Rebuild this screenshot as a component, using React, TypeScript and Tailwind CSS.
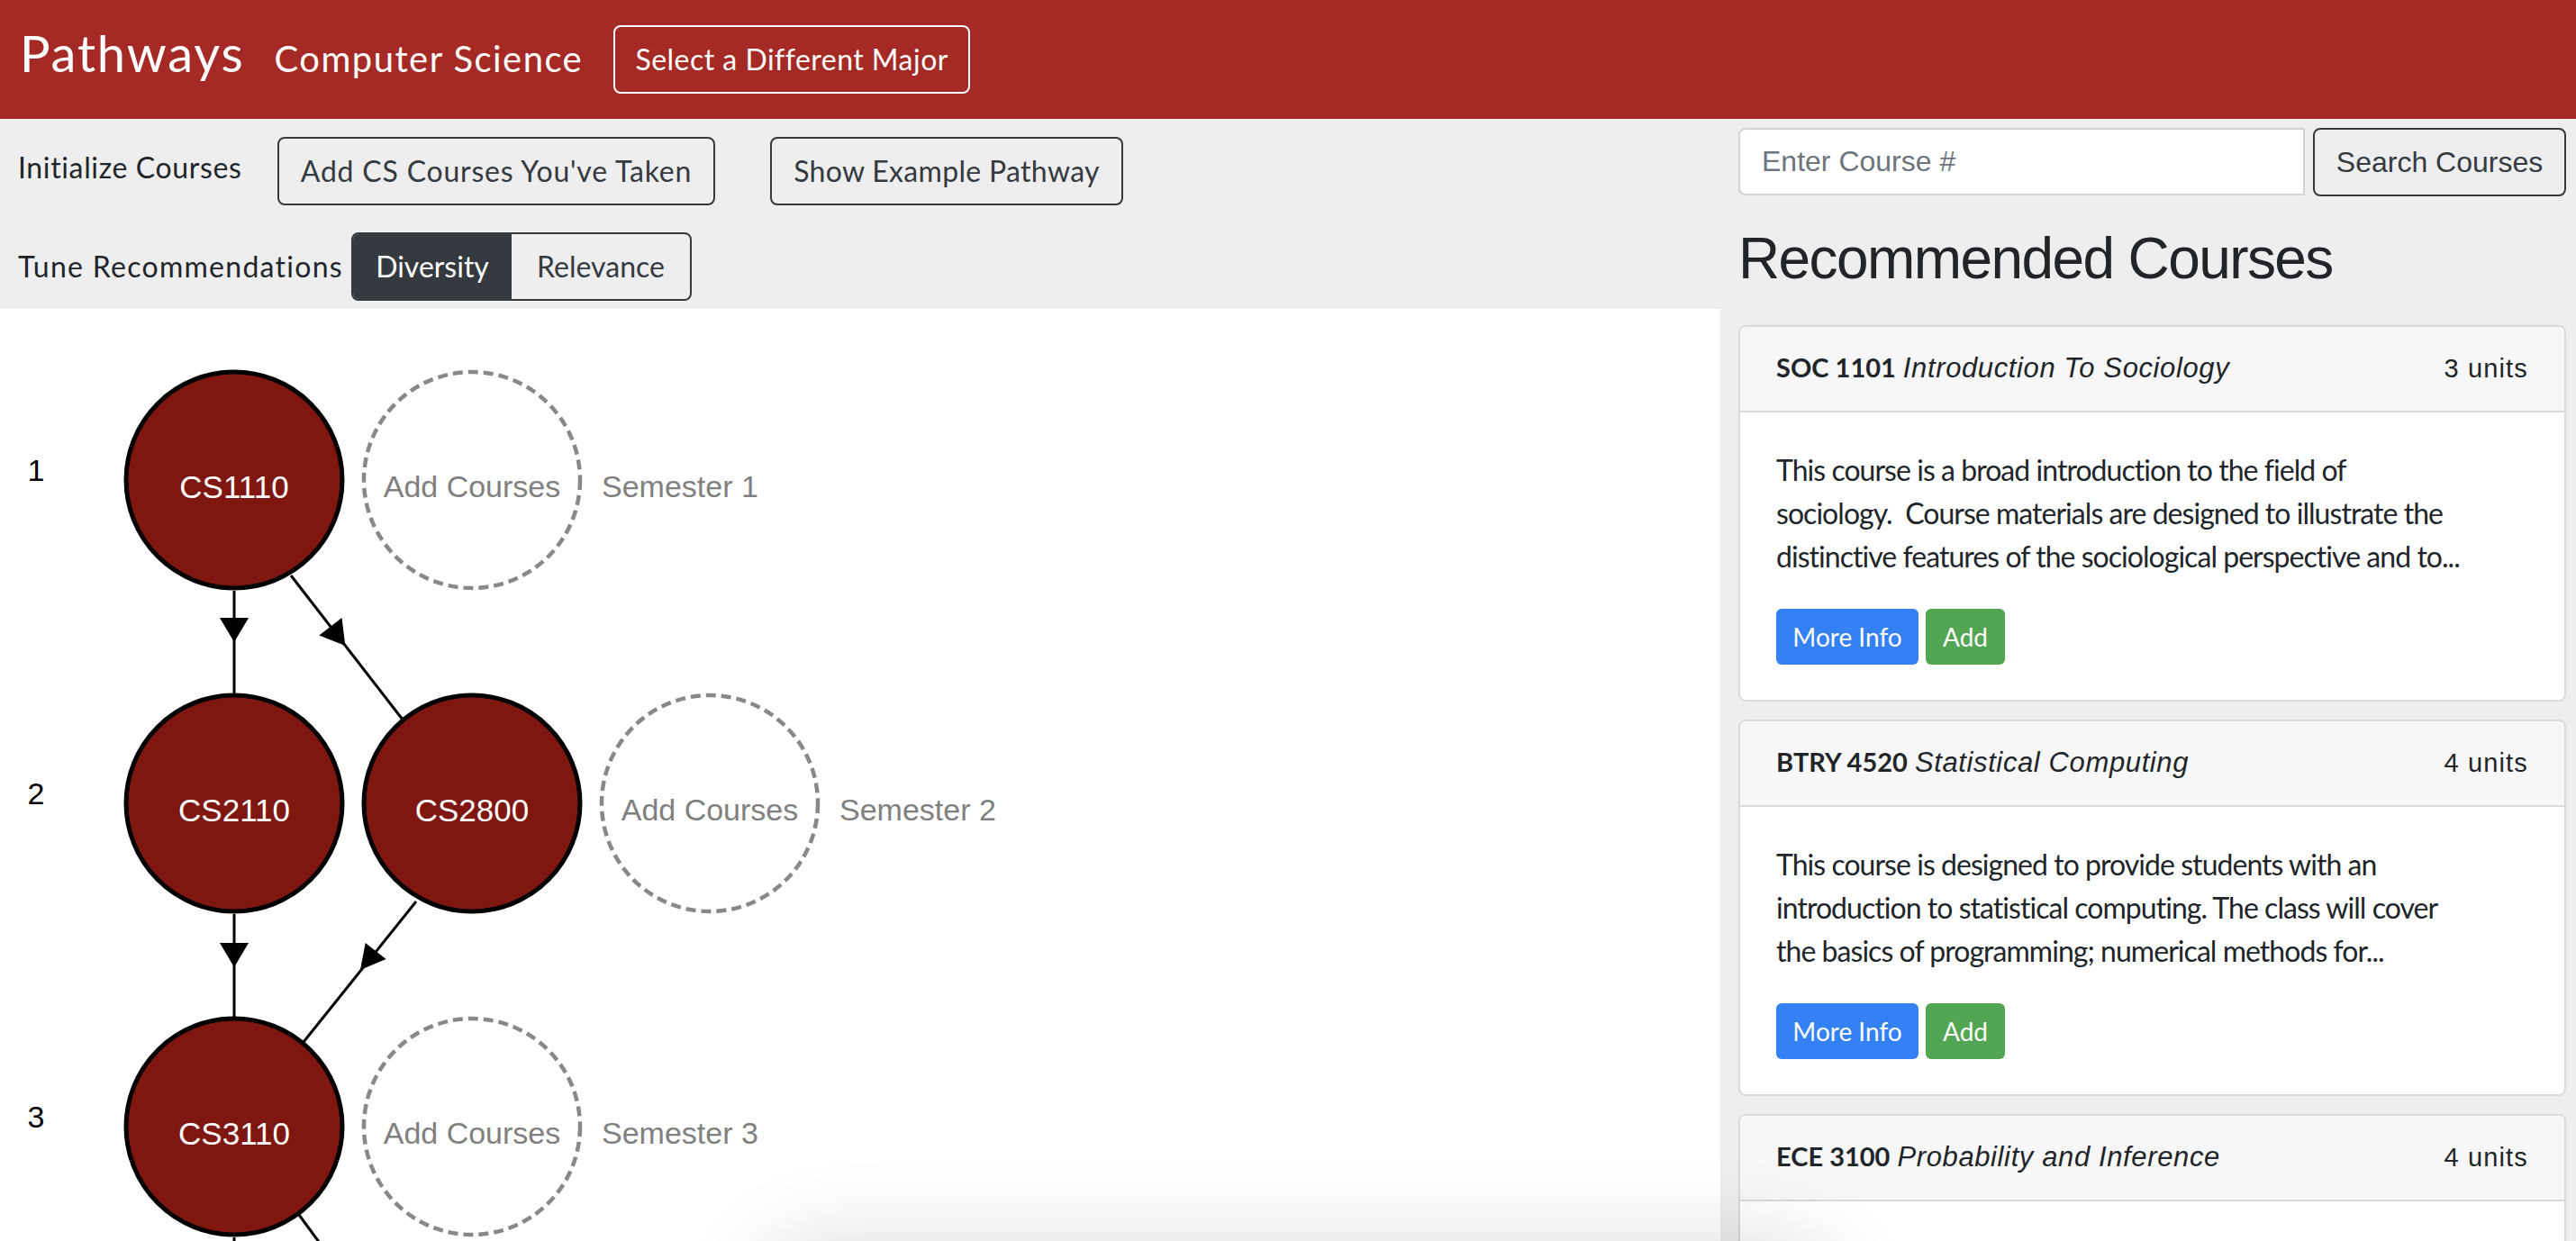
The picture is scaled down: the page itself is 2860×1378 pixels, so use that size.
import React from 'react';

type Course = {
  code: string;
  title: string;
  units: string;
  lines: string[];
};

const courses: Course[] = [
  {
    code: 'SOC 1101',
    title: 'Introduction To Sociology',
    units: '3 units',
    lines: [
      'This course is a broad introduction to the field of',
      'sociology.\u00a0 Course materials are designed to illustrate the',
      'distinctive features of the sociological perspective and to...',
    ],
  },
  {
    code: 'BTRY 4520',
    title: 'Statistical Computing',
    units: '4 units',
    lines: [
      'This course is designed to provide students with an',
      'introduction to statistical computing. The class will cover',
      'the basics of programming; numerical methods for...',
    ],
  },
  {
    code: 'ECE 3100',
    title: 'Probability and Inference',
    units: '4 units',
    lines: [],
  },
];

function CourseCard({ course }: { course: Course }) {
  return (
    <div className="overflow-hidden rounded-[8px] border-2 border-[#dadada] bg-white">
      <div className="flex h-[95px] items-center justify-between border-b-2 border-[#dadada] bg-[#f7f7f7] px-[40px] text-[#212529]">
        <div className="whitespace-nowrap font-['Lato',sans-serif] text-[29px]">
          <span className="font-bold">{course.code}</span>
          <span className="ml-[8px] font-['Liberation_Sans',sans-serif] text-[31px] italic tracking-[0.02em]">{course.title}</span>
        </div>
        <span className="font-['Liberation_Sans',sans-serif] text-[29px] tracking-[0.04em]">{course.units}</span>
      </div>
      {course.lines.length > 0 ? (
        <div className="px-[40px] pt-[40px] pb-[39px]">
          <p className="mb-[34px] whitespace-nowrap font-['Lato',sans-serif] text-[32px] leading-[48px] tracking-[-0.03em] text-[#212529]">
            {course.lines.map((line, i) => (
              <React.Fragment key={i}>
                {line}
                {i < course.lines.length - 1 && <br />}
              </React.Fragment>
            ))}
          </p>
          <div className="flex gap-[8px] font-['Lato',sans-serif] text-[28px] text-white">
            <button className="h-[62px] w-[158px] rounded-[6px] bg-[#3480f5]">More Info</button>
            <button className="h-[62px] w-[88px] rounded-[6px] bg-[#52a552]">Add</button>
          </div>
        </div>
      ) : (
        <div className="h-[300px]" />
      )}
    </div>
  );
}

// rows are 359px apart, columns 264px apart
const rowY = [190, 549, 908];
const colX = [260, 524, 788];

function Node({ x, y, label }: { x: number; y: number; label: string }) {
  return (
    <g>
      <circle cx={x} cy={y} r={120} fill="#7f1610" stroke="#000" strokeWidth={5} />
      <text x={x} y={y + 7} fill="#fff" fontSize={35} textAnchor="middle" dominantBaseline="central">
        {label}
      </text>
    </g>
  );
}

function AddSlot({ x, y, semester }: { x: number; y: number; semester: number }) {
  return (
    <g>
      <circle cx={x} cy={y} r={120} fill="none" stroke="#888" strokeWidth={4.5} strokeDasharray="11 6" />
      <text x={x} y={y + 7} fill="#808080" fontSize={34} textAnchor="middle" dominantBaseline="central">
        Add Courses
      </text>
      <text x={x + 144} y={y + 7} fill="#808080" fontSize={34} dominantBaseline="central">
        Semester {semester}
      </text>
    </g>
  );
}

function Pathway() {
  return (
    <svg width={1910} height={1035} className="block font-['Liberation_Sans',sans-serif]">
      <g stroke="#000" strokeWidth={3}>
        <line x1={260} y1={313} x2={260} y2={428} />
        <line x1={323} y1={296} x2={447} y2={456} />
        <line x1={260} y1={672} x2={260} y2={787} />
        <line x1={462} y1={658} x2={337} y2={814} />
        <line x1={260} y1={1031} x2={260} y2={1100} />
        <line x1={332} y1={1006} x2={452} y2={1169} />
      </g>
      <g fill="#000">
        <polygon points="244,343 276,343 260,370" />
        <polygon points="379.5,342.9 354.3,362.5 383.4,374" />
        <polygon points="244,704 276,704 260,731" />
        <polygon points="405.7,704 428.6,722 400,734" />
      </g>
      {rowY.map((y, i) => (
        <text key={i} x={40} y={y - 11} fontSize={34} textAnchor="middle" dominantBaseline="central" fill="#000">
          {i + 1}
        </text>
      ))}
      <Node x={colX[0]} y={rowY[0]} label="CS1110" />
      <AddSlot x={colX[1]} y={rowY[0]} semester={1} />
      <Node x={colX[0]} y={rowY[1]} label="CS2110" />
      <Node x={colX[1]} y={rowY[1]} label="CS2800" />
      <AddSlot x={colX[2]} y={rowY[1]} semester={2} />
      <Node x={colX[0]} y={rowY[2]} label="CS3110" />
      <AddSlot x={colX[1]} y={rowY[2]} semester={3} />
    </svg>
  );
}

export default function App() {
  return (
    <div className="relative h-[1378px] w-[2860px] overflow-hidden bg-white">
      <header className="flex h-[132px] items-center bg-[#a52a25] pl-[22px] font-['Lato',sans-serif] text-white">
        <div className="mb-[14px] flex items-baseline">
          <span className="text-[56px] leading-none tracking-[0.033em]">Pathways</span>
          <span className="ml-[33px] text-[40px] leading-none tracking-[0.036em]">Computer Science</span>
        </div>
        <button className="ml-[34px] h-[76px] w-[396px] rounded-[8px] border-2 border-white text-[32px] tracking-[0.015em]">
          Select a Different Major
        </button>
      </header>

      <div className="flex">
        <div className="w-[1910px]">
          <div className="h-[211px] bg-[#eeeeee] pl-[20px] pt-[20px] font-['Lato',sans-serif] text-[32px]">
            <div className="flex h-[76px] items-center">
              <span className="mb-[8px] w-[248px] whitespace-nowrap tracking-[0.02em] text-[#212529]">Initialize Courses</span>
              <button className="ml-[40px] h-[76px] w-[486px] whitespace-nowrap rounded-[8px] border-2 border-[#343a40] tracking-[0.025em] text-[#343a40]">
                Add CS Courses You've Taken
              </button>
              <button className="ml-[61px] h-[76px] w-[392px] whitespace-nowrap rounded-[8px] border-2 border-[#343a40] tracking-[0.01em] text-[#343a40]">
                Show Example Pathway
              </button>
            </div>
            <div className="mt-[30px] flex h-[76px] items-center">
              <span className="w-[361px] whitespace-nowrap tracking-[0.04em] text-[#212529]">Tune Recommendations</span>
              <div className="ml-[9px] flex h-[76px] overflow-hidden rounded-[8px] border-2 border-[#343a40]">
                <button className="w-[176px] bg-[#343a40] text-white">Diversity</button>
                <button className="w-[198px] text-[#343a40]">Relevance</button>
              </div>
            </div>
          </div>
          <Pathway />
        </div>

        <div className="h-[1246px] w-[950px] bg-[#eeeeee] pl-[20px] pr-[11px] pt-[10px]">
          <div className="flex h-[76px] gap-[9px] font-['Liberation_Sans',sans-serif] text-[32px]">
            <input
              readOnly
              placeholder="Enter Course #"
              className="h-[75px] w-[629px] rounded-l-[8px] border-2 border-[#ced4da] bg-white px-[24px] outline-none placeholder:text-[#6c757d]"
            />
            <button className="flex-1 rounded-[8px] border-2 border-[#343a40] text-[#343a40]">Search Courses</button>
          </div>
          <h2 className="mt-[31px] font-['Liberation_Sans',sans-serif] text-[64px] leading-[1.2] tracking-[-0.025em] text-[#212529]">
            Recommended Courses
          </h2>
          <div className="mt-[35px] flex flex-col gap-[20px]">
            {courses.map((c) => (
              <CourseCard key={c.code} course={c} />
            ))}
          </div>
        </div>
      </div>

      <div className="pointer-events-none absolute left-[860px] top-[1400px] h-[200px] w-[1160px] rounded-[60px] shadow-[0_0_90px_30px_rgba(0,0,0,0.12)]" />
    </div>
  );
}
